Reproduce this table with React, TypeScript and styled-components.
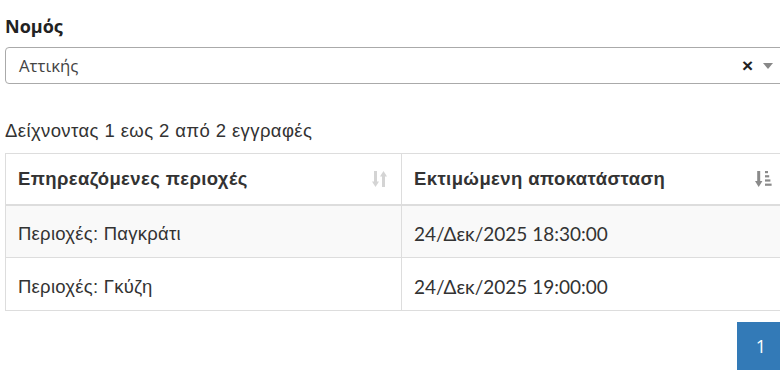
import React from "react";
import styled, { createGlobalStyle } from "styled-components";

const Global = createGlobalStyle`
  html, body { margin: 0; padding: 0; background: #fff; overflow: hidden; }
  * { box-sizing: border-box; }
`;

const Page = styled.div`
  width: 785px;
  padding: 14px 0 0 5px;
  font-family: "Liberation Sans", Arial, sans-serif;
  color: #333;
`;

const Label = styled.div`
  font-family: "Open Sans", sans-serif;
  font-weight: 700;
  font-size: 18px;
  line-height: 24px;
  height: 24px;
  color: #222;
`;

const Select = styled.div`
  margin-top: 9px;
  height: 37px;
  border: 1px solid #aaa;
  border-radius: 4px;
  display: flex;
  align-items: center;
  padding: 0 0 0 13px;
  font-family: "Open Sans", sans-serif;
  font-size: 16.8px;
  color: #444;
`;

const SelectValue = styled.span`
  flex: 1;
`;

const Clear = styled.span`
  font-family: "Liberation Sans", Arial, sans-serif;
  font-weight: 700;
  font-size: 19px;
  color: #222;
  margin-right: 10px;
  line-height: 1;
`;

const Arrow = styled.span`
  width: 0;
  height: 0;
  border-left: 5px solid transparent;
  border-right: 5px solid transparent;
  border-top: 6px solid #888;
  margin-right: 11px;
  margin-top: 1px;
`;

const Info = styled.div`
  margin-top: 35px;
  height: 24px;
  line-height: 24px;
  font-size: 18.5px;
  letter-spacing: 0.4px;
  color: #333;
`;

const Table = styled.table`
  margin-top: 10px;
  width: 100%;
  border-collapse: collapse;
  border: 1px solid #ddd;
  table-layout: fixed;
`;

const Th = styled.th<{ $w?: number }>`
  ${(p) => (p.$w ? `width: ${p.$w}px;` : "")}
  height: 51px;
  padding: 0 12px 0 12px;
  text-align: left;
  font-size: 18.5px;
  letter-spacing: 0.4px;
  font-weight: 700;
  color: #333;
  border: 1px solid #ddd;
  border-bottom: 2px solid #ddd;
  vertical-align: middle;
`;

const ThInner = styled.div`
  display: flex;
  align-items: center;
  justify-content: space-between;
`;

const Tr = styled.tr<{ $striped?: boolean }>`
  background: ${(p) => (p.$striped ? "#f9f9f9" : "#fff")};
`;

const Td = styled.td<{ $date?: boolean }>`
  height: 53px;
  padding: 5px 12px 0;
  font-size: 18.5px;
  letter-spacing: 0.25px;
  color: #333;
  border: 1px solid #ddd;
  vertical-align: middle;
  ${(p) =>
    p.$date
      ? `font-family: Lato, "Open Sans", sans-serif; font-size: 19px; letter-spacing: 0;`
      : ""}
`;

const Pager = styled.div`
  display: flex;
  justify-content: flex-end;
  margin-top: 11px;
`;

const PageBtn = styled.div`
  width: 48px;
  height: 48px;
  background: #337ab7;
  border: 1px solid #337ab7;
  color: #fff;
  font-family: "Open Sans", sans-serif;
  font-size: 18px;
  display: flex;
  align-items: center;
  justify-content: center;
`;

const SortBoth = () => (
  <svg width="15" height="20" viewBox="0 0 15 20" style={{ marginRight: 2 }}>
    <g fill="#d4d4d4">
      <rect x="2" y="2" width="3" height="13" />
      <polygon points="0,12.5 7,12.5 3.5,18" />
      <rect x="10" y="5" width="3" height="13" />
      <polygon points="8,7.5 15,7.5 11.5,2" />
    </g>
  </svg>
);

const SortDesc = () => (
  <svg width="17" height="20" viewBox="0 0 17 20" style={{ marginRight: 0 }}>
    <g fill="#8a8a8a">
      <rect x="2.2" y="2" width="3" height="12" />
      <polygon points="0,12 7.4,12 3.7,18" />
      <rect x="10" y="2" width="3" height="2.2" />
      <rect x="10" y="6.2" width="4.2" height="2.2" />
      <rect x="10" y="10.4" width="5.4" height="2.2" />
      <rect x="10" y="14.6" width="6.6" height="2.2" />
    </g>
  </svg>
);

export default function App() {
  return (
    <>
      <Global />
      <Page>
        <Label>Νομός</Label>
        <Select>
          <SelectValue>Αττικής</SelectValue>
          <Clear>×</Clear>
          <Arrow />
        </Select>
        <Info>Δείχνοντας 1 εως 2 από 2 εγγραφές</Info>
        <Table>
          <thead>
            <tr>
              <Th $w={396}>
                <ThInner>
                  <span>Επηρεαζόμενες περιοχές</span>
                  <SortBoth />
                </ThInner>
              </Th>
              <Th>
                <ThInner>
                  <span>Εκτιμώμενη αποκατάσταση</span>
                  <SortDesc />
                </ThInner>
              </Th>
            </tr>
          </thead>
          <tbody>
            <Tr $striped>
              <Td>Περιοχές: Παγκράτι</Td>
              <Td $date>24/Δεκ/2025 18:30:00</Td>
            </Tr>
            <Tr>
              <Td>Περιοχές: Γκύζη</Td>
              <Td $date>24/Δεκ/2025 19:00:00</Td>
            </Tr>
          </tbody>
        </Table>
        <Pager>
          <PageBtn>1</PageBtn>
        </Pager>
      </Page>
    </>
  );
}
